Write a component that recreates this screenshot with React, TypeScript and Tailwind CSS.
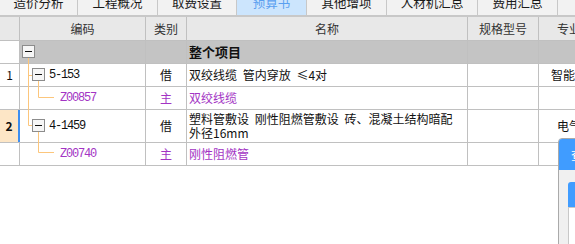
import React from "react";

const tabs = [
  { label: "造价分析", w: "w-[78px]" },
  { label: "工程概况", w: "w-[80px]" },
  { label: "取费设置", w: "w-[79px]" },
  { label: "预算书", w: "w-[70px]", active: true },
  { label: "其他增项", w: "w-[80px]" },
  { label: "人材机汇总", w: "w-[91px]" },
  { label: "费用汇总", w: "w-[80px]" },
  { label: "", w: "w-[60px]" },
];

const cell = "shrink-0 border-r border-b border-[#c0c0c0] flex items-center";
const codeFont = "font-['Liberation_Mono',monospace] text-[12px] tracking-[-1.2px]";
const purple = "text-[#a334c4]";

function TreeLines() {
  const orange = "#fcc67c";
  const box = "#8c8c8c";
  return (
    <svg
      className="absolute left-0 top-0 pointer-events-none"
      width={60}
      height={125}
      viewBox="0 41 60 125"
    >
      <g stroke={orange} strokeWidth={1} fill="none">
        <path d="M28.5 58 V125.5 M28.5 75.5 H32 M28.5 125.5 H32" />
        <path d="M38.5 81 V97.5 H54" />
        <path d="M38.5 132 V152.5 H54" />
      </g>
      <g stroke={box} strokeWidth={1} fill="#f6f6f6">
        <rect x={22.5} y={45.5} width={12} height={12} />
        <rect x={32.5} y={68.5} width={12} height={12} />
        <rect x={32.5} y={119.5} width={12} height={12} />
      </g>
      <g stroke="#111" strokeWidth={1}>
        <path d="M25 51.5 H32 M35 74.5 H42 M35 125.5 H42" />
      </g>
    </svg>
  );
}

export default function App() {
  return (
    <div className="relative w-[575px] h-[244px] overflow-hidden bg-white font-['Noto_Sans_CJK_SC',sans-serif] text-[12px] text-[#111]">
      {/* tab bar */}
      <div className="flex h-[17px] border-b-2 border-[#c8c8c8] bg-[#f2f2f2] overflow-hidden">
        {tabs.map((t) => (
          <div
            key={t.w + t.label}
            className={`${t.w} shrink-0 flex justify-center border-r border-[#c8c8c8] ${
              t.active ? "bg-[#cce5fd] text-[#5a9ff0]" : "text-[#1a1a1a]"
            }`}
          >
            <span className="-mt-[3px] leading-[12px] text-[12.5px]">{t.label}</span>
          </div>
        ))}
      </div>

      {/* header */}
      <div className="flex h-[24px] bg-[#e8e8e8] text-[#333] whitespace-nowrap">
        <div className={`${cell} w-[20px]`} />
        <div className={`${cell} w-[126px] justify-center`}>编码</div>
        <div className={`${cell} w-[41px] justify-center`}>类别</div>
        <div className={`${cell} w-[281px] justify-center`}>名称</div>
        <div className={`${cell} w-[71px] justify-center`}>规格型号</div>
        <div className={`${cell} w-[61px] justify-center`}>专业</div>
        <div className={`${cell} w-[60px]`} />
      </div>

      {/* body */}
      <div className="relative whitespace-nowrap [word-spacing:3px]">
        <div className="flex h-[23px]">
          <div className={`${cell} w-[20px] bg-white`} />
          <div className={`${cell} w-[126px] bg-[#c4c4c4]`} />
          <div className={`${cell} w-[41px] bg-[#c4c4c4]`} />
          <div className={`${cell} w-[281px] bg-[#c4c4c4] pl-[2px] font-bold text-[13px]`}>整个项目</div>
          <div className={`${cell} w-[71px] bg-[#c4c4c4]`} />
          <div className={`${cell} w-[61px] bg-[#c4c4c4]`} />
          <div className={`${cell} w-[60px] bg-[#c4c4c4]`} />
        </div>

        <div className="flex h-[23px]">
          <div className={`${cell} w-[20px] justify-center`}>1</div>
          <div className={`${cell} w-[126px] pl-[29px] ${codeFont}`}>5-153</div>
          <div className={`${cell} w-[41px] justify-center`}>借</div>
          <div className={`${cell} w-[281px] pl-[2px]`}>双绞线缆 管内穿放 ≤4对</div>
          <div className={`${cell} w-[71px]`} />
          <div className={`${cell} w-[61px] justify-center`}>智能化</div>
          <div className={`${cell} w-[60px]`} />
        </div>

        <div className="flex h-[23px]">
          <div className={`${cell} w-[20px]`} />
          <div className={`${cell} w-[126px] pl-[40px] ${codeFont} ${purple}`}>Z00857</div>
          <div className={`${cell} w-[41px] justify-center ${purple}`}>主</div>
          <div className={`${cell} w-[281px] pl-[2px] ${purple}`}>双绞线缆</div>
          <div className={`${cell} w-[71px]`} />
          <div className={`${cell} w-[61px]`} />
          <div className={`${cell} w-[60px]`} />
        </div>

        <div className="flex h-[33px]">
          <div className="shrink-0 w-[20px] flex border-b border-[#c0c0c0]">
            <div className="w-[18px] bg-[#fde6c6] flex items-center justify-center font-bold">2</div>
            <div className="w-[2px] bg-[#3d8ef0]" />
          </div>
          <div className={`${cell} w-[126px] pl-[29px] ${codeFont}`}>4-1459</div>
          <div className={`${cell} w-[41px] justify-center`}>借</div>
          <div className={`${cell} w-[281px] pl-[2px] flex-col !items-start justify-center leading-[14px]`}>
            <span>塑料管敷设 刚性阻燃管敷设 砖、混凝土结构暗配</span>
            <span>外径16mm</span>
          </div>
          <div className={`${cell} w-[71px]`} />
          <div className={`${cell} w-[61px] justify-center`}>电气</div>
          <div className={`${cell} w-[60px]`} />
        </div>

        <div className="flex h-[23px]">
          <div className={`${cell} w-[20px]`} />
          <div className={`${cell} w-[126px] pl-[40px] ${codeFont} ${purple}`}>Z00740</div>
          <div className={`${cell} w-[41px] justify-center ${purple}`}>主</div>
          <div className={`${cell} w-[281px] pl-[2px] ${purple}`}>刚性阻燃管</div>
          <div className={`${cell} w-[71px]`} />
          <div className={`${cell} w-[61px]`} />
          <div className={`${cell} w-[60px]`} />
        </div>

        <TreeLines />
      </div>

      {/* floating panel at right edge */}
      <div className="absolute left-[558px] top-[138px] w-[40px] h-[120px] rounded-tl-[4px] border border-[#aaaaaa] bg-[#f0f0f0] overflow-hidden">
        <div className="h-[31px] bg-[#409cff] text-white pl-[12px] flex items-center whitespace-nowrap">查询</div>
        <div className="mt-[12px] ml-[9px] h-[25px] rounded-tl-[3px] bg-[#409cff]" />
        <div className="ml-[9px] h-[60px] border-l border-t border-[#c8c8c8] bg-white" />
      </div>
    </div>
  );
}
